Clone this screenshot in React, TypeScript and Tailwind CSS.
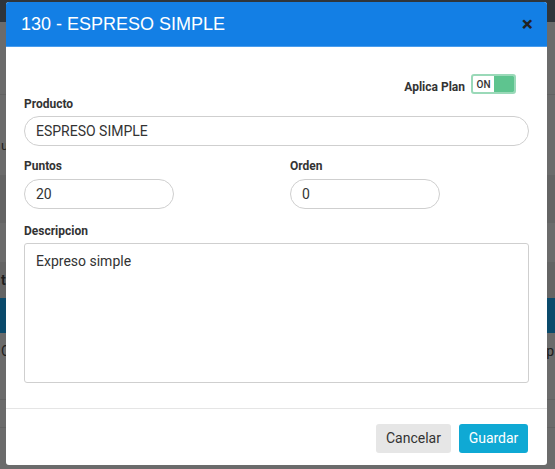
import React from "react";

export default function App() {
  return (
    <div className="relative w-[555px] h-[469px] overflow-hidden bg-[#6b6b6b]" style={{ fontFamily: "Roboto, 'Liberation Sans', Arial, sans-serif" }}>
      {/* page behind overlay */}
      <div className="flex flex-col w-full h-full">
        <div className="h-[22px] bg-[#2f353b]" />
        <div className="h-[73px] border-b border-[#626262]" />
        <div className="h-[80px] flex items-end pb-[20px] text-[13px] text-[#1d1d1d]">
          <span className="ml-[1px]">u</span>
        </div>
        <div className="h-[48px] bg-[#646464]" />
        <div className="h-[39px]" />
        <div className="h-[36px] bg-[#646464] flex items-center text-[14px] font-bold text-[#1d1d1d]">
          <span className="ml-[1px]">t</span>
        </div>
        <div className="h-[35px] bg-[#0a4a6b]" />
        <div className="h-[37px] flex items-center justify-between text-[14px] text-[#1d1d1d]">
          <span className="ml-[1px]">C</span>
          <span className="mr-[1px]">np</span>
        </div>
        <div className="h-[30px] border-b border-[#626262]" />
        <div className="h-[28px] border-b border-[#626262]" />
        <div className="flex-1" />
      </div>

      {/* modal */}
      <div className="absolute left-[6px] top-[2px] w-[541px] h-[463px] bg-white rounded-[3px] flex flex-col overflow-hidden">
        <div className="h-[45px] bg-[#137fe5] border-b border-[#4a9ded] flex items-center justify-between pl-[15px] pr-[14px]">
          <span className="text-white text-[18px]" style={{ fontFamily: "'Liberation Sans', Arial, sans-serif" }}>130 - ESPRESO SIMPLE</span>
          <span className="text-[#222] text-[21px] font-bold leading-none">×</span>
        </div>

        <div className="flex flex-col px-[18px] pt-[27px]">
          <div className="flex justify-end items-center gap-[6px] pr-[13px] h-[20px]">
            <span className="text-[12px] font-bold text-[#333] mt-[6px]">Aplica Plan</span>
            <div className="w-[45px] h-[20px] rounded-[3px] border-2 border-[#9ad9b8] flex items-stretch overflow-hidden">
              <div className="flex-1 flex items-center justify-center text-[10px] text-[#333] font-medium">ON</div>
              <div className="w-[20px] bg-[#5ec48f]" />
            </div>
          </div>

          <label className="text-[12px] font-bold text-[#333] mt-[2px] leading-[16px]">Producto</label>
          <div className="mt-[4px] h-[30px] rounded-full border border-[#cfcfcf] flex items-center px-[11px] text-[14px] text-[#333]">ESPRESO SIMPLE</div>

          <div className="flex gap-[116px] mt-[12px]">
            <div className="flex flex-col w-[150px]">
              <label className="text-[12px] font-bold text-[#333] leading-[16px]">Puntos</label>
              <div className="mt-[5px] h-[30px] rounded-full border border-[#cfcfcf] flex items-center px-[11px] text-[14px] text-[#333]">20</div>
            </div>
            <div className="flex flex-col w-[150px]">
              <label className="text-[12px] font-bold text-[#333] leading-[16px]">Orden</label>
              <div className="mt-[5px] h-[30px] rounded-full border border-[#cfcfcf] flex items-center px-[11px] text-[14px] text-[#333]">0</div>
            </div>
          </div>

          <label className="text-[12px] font-bold text-[#333] mt-[14px] leading-[16px]">Descripcion</label>
          <div className="mt-[4px] h-[140px] rounded-[3px] border border-[#cfcfcf] px-[11px] pt-[7px] text-[14px] text-[#333]">Expreso simple</div>
        </div>

        <div className="mt-[25px] border-t border-[#e5e5e5] flex justify-end gap-[8px] px-[19px] pt-[15px]">
          <button className="h-[29px] w-[75px] rounded-[3px] bg-[#e6e6e6] text-[14px] text-[#333]">Cancelar</button>
          <button className="h-[29px] w-[69px] rounded-[3px] bg-[#0fa9d4] text-[14px] text-white">Guardar</button>
        </div>
      </div>
    </div>
  );
}
